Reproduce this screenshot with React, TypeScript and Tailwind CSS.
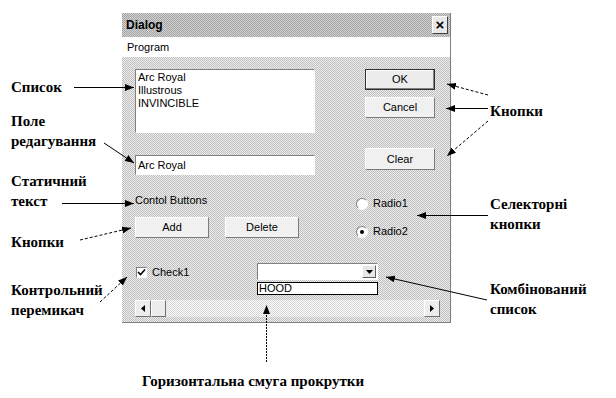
import React from "react";

const sans = "[font-family:Liberation_Sans,Arial,sans-serif] text-[11px] leading-[13px] text-black";
const serif = "[font-family:Liberation_Serif,Times_New_Roman,serif] font-bold text-[15px] leading-[17px] text-black";

function Label({ x, y, children }: { x: number; y: number; children: React.ReactNode }) {
  return (
    <span className={`absolute whitespace-nowrap ${serif}`} style={{ left: x, top: y }}>
      {children}
    </span>
  );
}

function Button({ label, isDefault = false, h = 21 }: { label: string; isDefault?: boolean; h?: number }) {
  return (
    <div
      className={
        isDefault
          ? "flex w-[70px] items-center justify-center border border-[#303030] bg-[#ececec] shadow-[inset_-1px_-1px_0_#808080,inset_1px_1px_0_#fff]"
          : "flex w-[70px] items-center justify-center border border-white border-r-[#7c7c7c] border-b-[#7c7c7c] bg-[#f0f0f0]"
      }
      style={{ height: h }}
    >
      <span className={sans}>{label}</span>
    </div>
  );
}

function WideButton({ label }: { label: string }) {
  return (
    <div className="flex h-[21px] w-[74px] items-center justify-center border border-white border-r-[#7c7c7c] border-b-[#7c7c7c] bg-[#f0f0f0]">
      <span className={sans}>{label}</span>
    </div>
  );
}

function Radio({ label, checked }: { label: string; checked?: boolean }) {
  return (
    <div className="flex items-center gap-[5px]">
      <div className="flex h-[12px] w-[12px] items-center justify-center rounded-full border border-[#808080] border-r-white border-b-white bg-white">
        {checked && <div className="h-[4px] w-[4px] rounded-full bg-black" />}
      </div>
      <span className={sans}>{label}</span>
    </div>
  );
}

function Arrows() {
  return (
    <svg className="absolute left-0 top-0" width="616" height="398" viewBox="0 0 616 398">
      <defs>
        <marker id="ah" markerWidth="9" markerHeight="7" refX="9" refY="3.5" orient="auto" markerUnits="userSpaceOnUse">
          <path d="M0,0 L9,3.5 L0,7 z" fill="#000" />
        </marker>
      </defs>
      <g stroke="#000" strokeWidth="1" fill="none" markerEnd="url(#ah)">
        <line x1="74" y1="87.5" x2="134" y2="87.5" />
        <line x1="104" y1="143" x2="134" y2="163" />
        <line x1="62" y1="203.5" x2="134" y2="203.5" />
        <line x1="80" y1="240" x2="131" y2="228" strokeDasharray="3 2" />
        <line x1="100" y1="302" x2="127" y2="277" strokeDasharray="3 2" />
        <line x1="488" y1="95" x2="447" y2="84" strokeDasharray="3 2" />
        <line x1="488" y1="108.5" x2="446" y2="108.5" />
        <line x1="488" y1="121" x2="447" y2="156" strokeDasharray="3 2" />
        <line x1="488" y1="215.5" x2="417" y2="215.5" />
        <line x1="487" y1="300" x2="386" y2="277" />
        <line x1="266.5" y1="362" x2="266.5" y2="305" strokeDasharray="2 1" />
      </g>
    </svg>
  );
}

export default function App() {
  return (
    <div className="relative h-[398px] w-[616px] overflow-hidden bg-white pl-[122px] pt-[13px]">
      <div className="flex h-[310px] w-[329px] flex-col border-r border-b border-[#808080] bg-[image:repeating-conic-gradient(#c0c0c0_0_25%,#ececec_0_50%)] bg-[length:2px_2px]">
        {/* title bar */}
        <div className="flex h-[24px] items-center justify-between bg-[image:repeating-conic-gradient(#a4a4a4_0_25%,#d2d2d2_0_50%)] bg-[length:2px_2px] pl-[4px] pr-[2px]">
          <span className="[font-family:Liberation_Sans,Arial,sans-serif] text-[12px] font-bold leading-[14px] text-black">Dialog</span>
          <div className="flex h-[18px] w-[16px] items-center justify-center border border-white border-r-[#404040] border-b-[#404040] bg-[#e8e8e8]">
            <span className="[font-family:Liberation_Sans,Arial,sans-serif] text-[15px] font-black leading-[14px] text-black">×</span>
          </div>
        </div>
        {/* menu */}
        <div className="flex h-[20px] items-center bg-white pl-[5px]">
          <span className={sans}>Program</span>
        </div>

        <div className="flex flex-col pl-[13px] pt-[12px]">
          {/* list / edit + buttons */}
          <div className="flex h-[106px]">
            <div className="flex w-[180px] flex-col">
              <div className="h-[64px] border border-[#808080] border-r-white border-b-white bg-white px-[2px] pt-[1px]">
                <div className={sans}>Arc Royal</div>
                <div className={sans}>Illustrous</div>
                <div className={sans}>INVINCIBLE</div>
              </div>
              <div className="mt-[22px] flex h-[20px] items-center border border-[#808080] border-r-white border-b-white bg-white px-[2px]">
                <span className={sans}>Arc Royal</span>
              </div>
            </div>
            <div className="ml-[50px] flex w-[70px] flex-col">
              <Button label="OK" isDefault />
              <div className="mt-[7px]">
                <Button label="Cancel" />
              </div>
              <div className="mt-[30px]">
                <Button label="Clear" h={22} />
              </div>
            </div>
          </div>

          {/* static + add/delete + radios */}
          <div className="mt-[19px] flex h-[44px]">
            <div className="flex w-[180px] flex-col">
              <div className={sans}>Contol Buttons</div>
              <div className="mt-[10px] flex gap-[16px]">
                <WideButton label="Add" />
                <WideButton label="Delete" />
              </div>
            </div>
            <div className="ml-[41px] flex flex-col gap-[15px] pt-[3px]">
              <Radio label="Radio1" />
              <Radio label="Radio2" checked />
            </div>
          </div>

          {/* checkbox + combo */}
          <div className="mt-[25px] flex h-[32px]">
            <div className="flex w-[122px] items-start">
              <div className="ml-[1px] mt-[4px] flex h-[11px] w-[11px] items-center justify-center border border-[#808080] border-r-white border-b-white bg-white">
                <svg width="9" height="9" viewBox="0 0 9 9">
                  <path d="M1 4 L3.5 6.5 L8 1.5" stroke="#000" strokeWidth="1.6" fill="none" />
                </svg>
              </div>
              <span className={`ml-[5px] mt-[3px] ${sans}`}>Check1</span>
            </div>
            <div className="flex w-[121px] flex-col">
              <div className="flex h-[17px] justify-end border border-[#808080] border-r-white border-b-white bg-white p-[1px]">
                <div className="flex w-[14px] items-center justify-center border border-white border-r-[#606060] border-b-[#606060] bg-[#e6e6e6]">
                  <svg width="7" height="4" viewBox="0 0 7 4">
                    <path d="M0 0 L7 0 L3.5 4 z" fill="#000" />
                  </svg>
                </div>
              </div>
              <div className="mt-[2px] flex h-[13px] items-center border border-black bg-white px-[1px]">
                <span className={sans}>HOOD</span>
              </div>
            </div>
          </div>

          {/* scrollbar */}
          <div className="mt-[5px] flex h-[17px] w-[305px] bg-[image:repeating-conic-gradient(#d8d8d8_0_25%,#fafafa_0_50%)] bg-[length:2px_2px]">
            <div className="flex w-[16px] items-center justify-center border border-white border-r-[#707070] border-b-[#707070] bg-[#ececec]">
              <svg width="4" height="7" viewBox="0 0 4 7">
                <path d="M4 0 L4 7 L0 3.5 z" fill="#000" />
              </svg>
            </div>
            <div className="w-[15px] border border-white border-r-[#707070] border-b-[#707070] bg-[#ececec]" />
            <div className="flex-1" />
            <div className="flex w-[16px] items-center justify-center border border-white border-r-[#707070] border-b-[#707070] bg-[#ececec]">
              <svg width="4" height="7" viewBox="0 0 4 7">
                <path d="M0 0 L4 3.5 L0 7 z" fill="#000" />
              </svg>
            </div>
          </div>
        </div>
      </div>

      <Arrows />

      <Label x={11} y={79}>Список</Label>
      <Label x={11} y={113}>Поле</Label>
      <Label x={11} y={133}>редагування</Label>
      <Label x={11} y={173}>Статичний</Label>
      <Label x={11} y={193}>текст</Label>
      <Label x={11} y={234}>Кнопки</Label>
      <Label x={11} y={282}>Контрольний</Label>
      <Label x={11} y={302}>перемикач</Label>
      <Label x={490} y={103}>Кнопки</Label>
      <Label x={490} y={196}>Селекторні</Label>
      <Label x={490} y={216}>кнопки</Label>
      <Label x={490} y={281}>Комбінований</Label>
      <Label x={490} y={301}>список</Label>
      <Label x={142} y={373}>Горизонтальна смуга прокрутки</Label>
    </div>
  );
}
